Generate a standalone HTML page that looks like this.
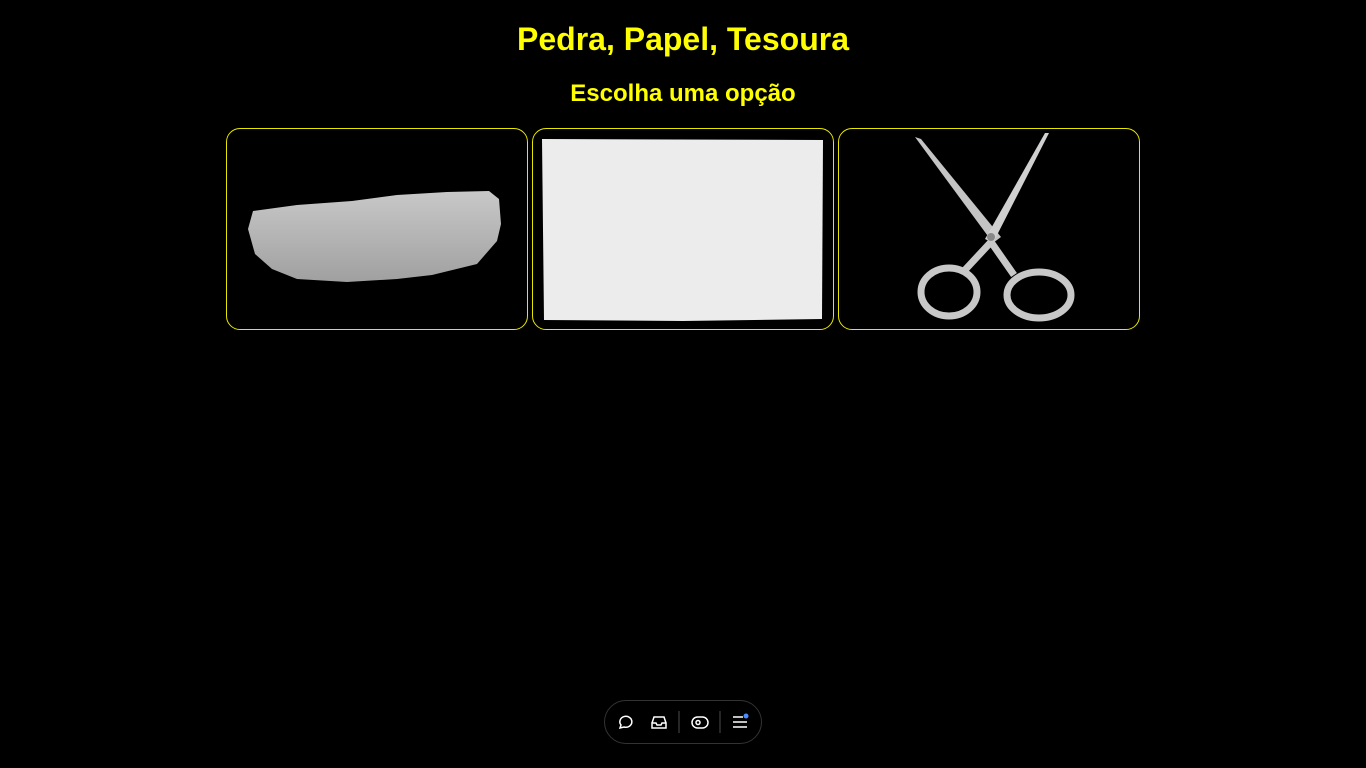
<!DOCTYPE html>
<html><head><meta charset="utf-8"><style>
html,body{margin:0;padding:0;background:#000;width:1366px;height:768px;overflow:hidden;font-family:"Liberation Sans",Arial,sans-serif}
h1{position:absolute;top:20px;left:0;width:1366px;margin:0;text-align:center;color:#ff0;font-size:32px;font-weight:bold;line-height:38px}
h2{position:absolute;top:79px;left:0;width:1366px;margin:0;text-align:center;color:#ff0;font-size:24px;font-weight:bold;line-height:30px}
.card{position:absolute;top:128px;width:300px;height:200px;border:1px solid #e6e600;border-radius:14px;overflow:hidden}
.bar{position:absolute;left:604px;top:700px;width:156px;height:42px;border:1px solid #333;border-radius:22px;background:#000}
</style></head><body>
<h1>Pedra, Papel, Tesoura</h1>
<h2>Escolha uma opção</h2>
<div class="card" style="left:226px">
<svg width="300" height="200"><defs><linearGradient id="r" x1="0" y1="0" x2="0" y2="1"><stop offset="0" stop-color="#c8c8c8"/><stop offset="1" stop-color="#a0a0a0"/></linearGradient></defs>
<path d="M26 82 L70 76 L125 72 L170 66 L220 63 L262 62 L272 70 L274 95 L270 112 L250 135 L205 146 L170 150 L120 153 L70 150 L45 140 L28 125 L21 100 Z" fill="url(#r)"/></svg></div>
<div class="card" style="left:532px">
<svg width="300" height="200"><path d="M9 10 L290 11 L289 190 L150 192 L11 191 Z" fill="#ececec"/></svg></div>
<div class="card" style="left:838px">
<svg width="300" height="200">
<path d="M76 8 L82 10 L162 108 L154 114 Z" fill="#c4c4c4"/>
<path d="M210 4 L206 4 L146 110 L154 114 Z" fill="#d0d0d0"/>
<g stroke="#c8c8c8" stroke-width="7" fill="none"><ellipse cx="110" cy="163" rx="28" ry="24"/><ellipse cx="200" cy="166" rx="32" ry="23"/><path d="M152 113 L125 142 M152 113 L175 146"/></g>
<circle cx="152" cy="108" r="4" fill="#888"/></svg></div>
<div class="bar">
<svg width="156" height="42" fill="none" stroke="#fff" stroke-width="1.5">
<path d="M15 27 l1-3 a6 5.5 0 1 1 3 2 z"/>
<path d="M47 22 h4 l1 2 h4 l1-2 h4 v5 h-14 z M47 22 l2-6 h10 l2 6"/>
<line x1="74" y1="10" x2="74" y2="32" stroke="#333"/>
<rect x="87" y="16" width="16" height="11" rx="5.5"/><circle cx="93" cy="21.5" r="2"/>
<line x1="115" y1="10" x2="115" y2="32" stroke="#333"/>
<path d="M128 16 h10 M128 21 h14 M128 26 h14"/>
<circle cx="141" cy="15" r="2.5" fill="#4a8cff" stroke="none"/></svg></div>
</body></html>
